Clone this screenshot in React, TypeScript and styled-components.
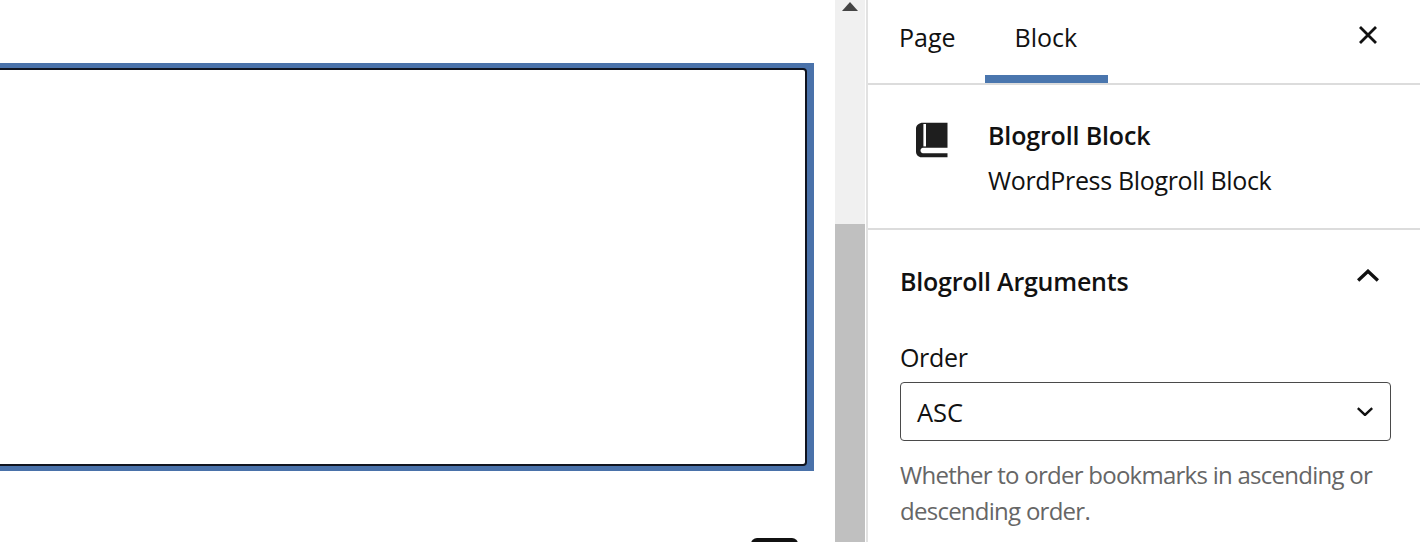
import React from 'react';
import styled, { createGlobalStyle } from 'styled-components';

const GlobalStyle = createGlobalStyle`
  html, body {
    margin: 0;
    height: 100%;
    background: #fff;
    overflow: hidden;
  }
  body {
    font-family: "Open Sans", "Noto Sans", sans-serif;
    color: #111;
  }
`;

function BookIcon() {
  return (
    <svg width="32" height="36" viewBox="0 0 32 36" fill="#1e1e1e">
      <path d="M7 0.7H31.5V25.7H7C5.4 25.7 4.5 27.2 4.5 28.6C4.5 30 5.4 31.2 7 31.2H31.5V35.2H5.5C2.5 35.2 0 32.7 0 29.7V6.7C0 3.2 3 0.7 7 0.7Z" />
      <rect x="7.4" y="2" width="2.6" height="22.4" fill="#fff" />
    </svg>
  );
}

function CloseIcon() {
  return (
    <svg width="20" height="20" viewBox="0 0 20 20" fill="none" stroke="#111" strokeWidth="2.8">
      <path d="M2 2L18 18M18 2L2 18" />
    </svg>
  );
}

function Chevron({ up, width }: { up?: boolean; width: number }) {
  return (
    <svg width={width} height={width * 0.6} viewBox="0 0 20 12" fill="none" stroke="#111" strokeWidth="3">
      <path d={up ? 'M1 10.5L10 2L19 10.5' : 'M1 1.5L10 10L19 1.5'} />
    </svg>
  );
}

export default function App() {
  return (
    <>
      <GlobalStyle />
      <Page>
        <Canvas>
          <BlockFrame>
            <BlockInner />
          </BlockFrame>
          <ToolbarTip />
        </Canvas>
        <Scrollbar>
          <ArrowUp />
          <Thumb />
        </Scrollbar>
        <Sidebar>
          <Tabs>
            <TabList>
              <Tab>Page</Tab>
              <Tab $active>Block</Tab>
            </TabList>
            <CloseButton>
              <CloseIcon />
            </CloseButton>
          </Tabs>
          <BlockCard>
            <BlockIcon>
              <BookIcon />
            </BlockIcon>
            <BlockText>
              <BlockTitle>Blogroll Block</BlockTitle>
              <BlockDescription>WordPress Blogroll Block</BlockDescription>
            </BlockText>
          </BlockCard>
          <Panel>
            <PanelHeader>
              <PanelTitle>Blogroll Arguments</PanelTitle>
              <PanelToggle>
                <Chevron up width={22} />
              </PanelToggle>
            </PanelHeader>
            <FieldLabel>Order</FieldLabel>
            <SelectBox>
              <span>ASC</span>
              <Chevron width={16} />
            </SelectBox>
            <HelpText>Whether to order bookmarks in ascending or descending order.</HelpText>
          </Panel>
        </Sidebar>
      </Page>
    </>
  );
}

const Page = styled.div`
  display: flex;
  width: 1420px;
  height: 542px;
  overflow: hidden;
`;
const Canvas = styled.main`
  width: 835px;
  flex: none;
  padding-top: 63px;
  box-sizing: border-box;
`;
const BlockFrame = styled.div`
  width: 814px;
  height: 408px;
  box-sizing: border-box;
  padding: 5px 7px 5px 0;
  background: #4a72aa;
`;
const BlockInner = styled.div`
  height: 100%;
  box-sizing: border-box;
  background: #fff;
  border: 2px solid #10141f;
  border-left: none;
  border-radius: 0 4px 4px 0;
`;
const ToolbarTip = styled.div`
  width: 47px;
  height: 12px;
  margin: 67px 0 0 751px;
  background: #111;
  border-radius: 6px 6px 0 0;
`;
const Scrollbar = styled.div`
  width: 30px;
  flex: none;
  display: flex;
  flex-direction: column;
  align-items: center;
  background: #f0f0f0;
`;
const ArrowUp = styled.div`
  width: 0;
  height: 0;
  margin-top: 2px;
  border-left: 8px solid transparent;
  border-right: 8px solid transparent;
  border-bottom: 9px solid #444;
`;
const Thumb = styled.div`
  align-self: stretch;
  flex: 1;
  margin-top: 213px;
  background: #c0c0c0;
`;
const Sidebar = styled.aside`
  flex: 1;
  margin-left: 1px;
  border-left: 2px solid #e2e2e2;
  box-sizing: border-box;
  min-width: 0;
`;
const Tabs = styled.div`
  display: flex;
  justify-content: space-between;
  height: 85px;
  box-sizing: border-box;
  border-bottom: 2px solid #dcdcdc;
`;
const TabList = styled.div`
  display: flex;
  padding-left: 1px;
`;
const Tab = styled.div<{ $active?: boolean }>`
  height: 83px;
  box-sizing: border-box;
  padding: 19px ${(p) => (p.$active ? '31px' : '30px')} 0 30px;
  margin-left: ${(p) => (p.$active ? '-1px' : '0')};
  font-size: 25px;
  line-height: 36px;
  border-bottom: 8px solid ${(p) => (p.$active ? '#4a76ae' : 'transparent')};
`;
const CloseButton = styled.div`
  display: flex;
  padding: 25px 42px 0 0;
`;
const BlockCard = styled.section`
  display: flex;
  height: 145px;
  box-sizing: border-box;
  padding: 37px 0 0 48px;
  border-bottom: 2px solid #dcdcdc;
`;
const BlockIcon = styled.div`
  width: 72px;
  flex: none;
`;
const BlockText = styled.div`
  display: flex;
  flex-direction: column;
  gap: 9px;
`;
const BlockTitle = styled.div`
  font-size: 25px;
  font-weight: 600;
  line-height: 36px;
  margin-top: -5px;
  letter-spacing: -0.15px;
`;
const BlockDescription = styled.div`
  font-size: 25px;
  line-height: 36px;
  letter-spacing: -0.33px;
`;
const Panel = styled.section`
  padding: 0 29px 0 32px;
`;
const PanelHeader = styled.div`
  display: flex;
  justify-content: space-between;
  align-items: center;
  height: 102px;
  padding-bottom: 2px;
`;
const PanelTitle = styled.div`
  font-size: 25px;
  font-weight: 600;
  line-height: 36px;
  letter-spacing: -0.22px;
`;
const PanelToggle = styled.div`
  display: flex;
  padding: 0 12px 10px 0;
`;
const FieldLabel = styled.div`
  font-size: 25px;
  line-height: 36px;
  margin: 5px 0 7px;
  letter-spacing: -0.33px;
`;
const SelectBox = styled.div`
  display: flex;
  justify-content: space-between;
  align-items: center;
  height: 59px;
  box-sizing: border-box;
  padding: 0 17px 0 16px;
  border: 1.5px solid #4a4a4a;
  border-radius: 4px;
  font-size: 25.5px;
`;
const HelpText = styled.p`
  margin: 16px 0 0;
  font-size: 24px;
  line-height: 36px;
  letter-spacing: -0.74px;
  color: #666;
`;
